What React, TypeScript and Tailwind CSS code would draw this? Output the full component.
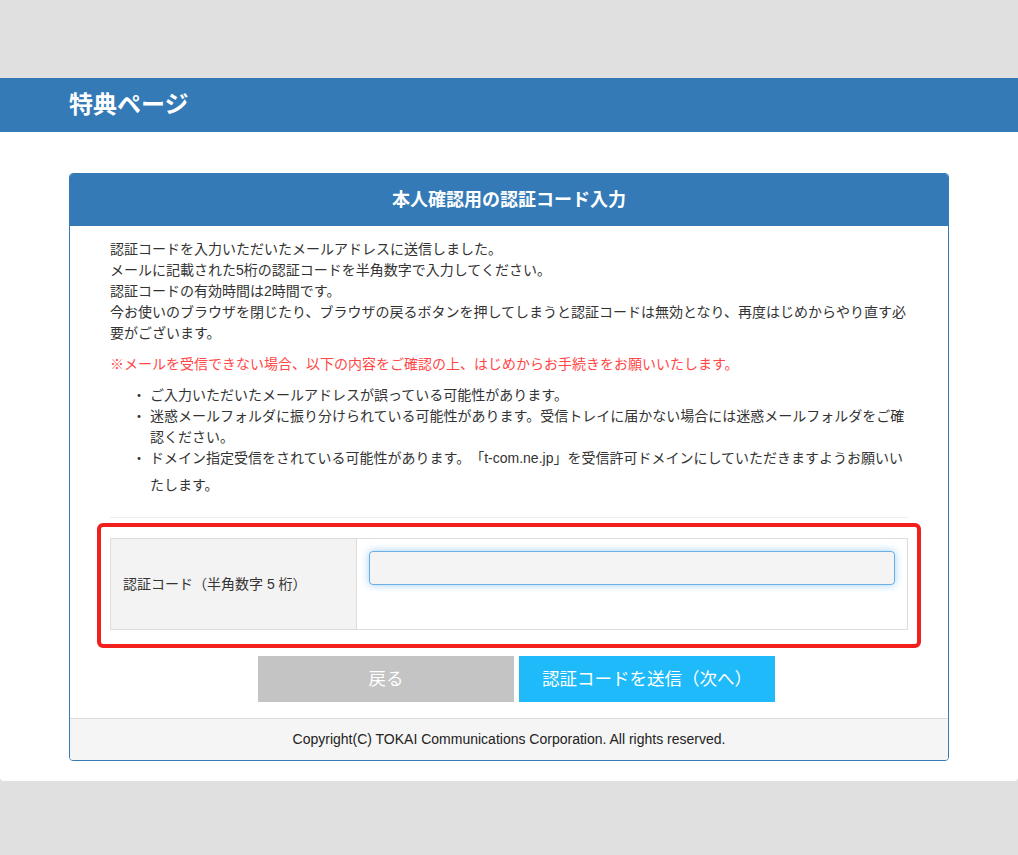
const jp = { fontFamily: '"Liberation Sans", "Noto Sans CJK JP", sans-serif' };

function Bullet({ children, className = "" }: { children: React.ReactNode; className?: string }) {
  return (
    <li className={`flex ${className}`}>
      <span className="w-[18px] shrink-0">・</span>
      <span className="flex-1">{children}</span>
    </li>
  );
}

export default function App() {
  return (
    <div className="min-h-screen bg-[#e0e0e0] pt-[78px] text-[#333] [text-spacing-trim:space-all]" style={jp}>
      <header className="h-[54px] bg-[#337ab7]">
        <div className="mx-auto flex h-full w-[880px] items-center">
          <h1 className="text-[24px] font-bold text-white">特典ページ</h1>
        </div>
      </header>

      <main className="rounded-b-[4px] bg-white pt-[41px] pb-[20px]">
        <div className="mx-auto w-[880px] overflow-hidden rounded-[4px] border border-[#337ab7]">
          <div className="flex h-[52px] items-center justify-center bg-[#337ab7]">
            <h2 className="text-[18px] font-bold text-white">本人確認用の認証コード入力</h2>
          </div>

          <div className="px-10 pt-[13px] pb-[16px] text-[14px] leading-[21px]">
            <p>
              認証コードを入力いただいたメールアドレスに送信しました。
              <br />
              メールに記載された5桁の認証コードを半角数字で入力してください。
              <br />
              認証コードの有効時間は2時間です。
              <br />
              今お使いのブラウザを閉じたり、ブラウザの戻るボタンを押してしまうと認証コードは無効となり、再度はじめからやり直す必要がございます。
            </p>
            <p className="mt-[10px] text-[#ff4747]">
              ※メールを受信できない場合、以下の内容をご確認の上、はじめからお手続きをお願いいたします。
            </p>
            <ul className="mt-[10px] pl-[22px]">
              <Bullet>ご入力いただいたメールアドレスが誤っている可能性があります。</Bullet>
              <Bullet>
                迷惑メールフォルダに振り分けられている可能性があります。受信トレイに届かない場合には迷惑メールフォルダをご確認ください。
              </Bullet>
              <Bullet className="-mt-[3px] leading-[27px]">
                ドメイン指定受信をされている可能性があります。「t-com.ne.jp」を受信許可ドメインにしていただきますようお願いいたします。
              </Bullet>
            </ul>

            <div className="mt-[18px] border-t border-[#eeeeee]" />

            <div className="-mx-[13px] mt-[5px] rounded-[6px] border-4 border-[#f21f1f] px-[9px] pt-[11px] pb-[14px]">
              <div className="flex h-[92px] border border-[#dddddd]">
                <div className="flex w-[246px] items-center border-r border-[#dddddd] bg-[#f3f3f3] px-3">
                  認証コード（半角数字 5 桁）
                </div>
                <div className="flex-1 p-3">
                  <input
                    type="text"
                    className="block h-[34px] w-full rounded-[4px] border border-[#66afe9] bg-[#f4f4f4] px-3 outline-none shadow-[0_0_8px_rgba(102,175,233,0.6)]"
                  />
                </div>
              </div>
            </div>

            <div className="mt-[8px] flex justify-center gap-[5px] pl-[15px]">
              <button className="h-[46px] w-[256px] bg-[#c4c4c4] text-[17.5px] text-white">戻る</button>
              <button className="h-[46px] w-[256px] bg-[#1fbaf9] text-[17.5px] text-white">
                認証コードを送信（次へ）
              </button>
            </div>
          </div>

          <footer className="flex h-[42px] items-center justify-center border-t border-[#dddddd] bg-[#f5f5f5] text-[14px] text-[#222]">
            Copyright(C) TOKAI Communications Corporation. All rights reserved.
          </footer>
        </div>
      </main>
    </div>
  );
}
